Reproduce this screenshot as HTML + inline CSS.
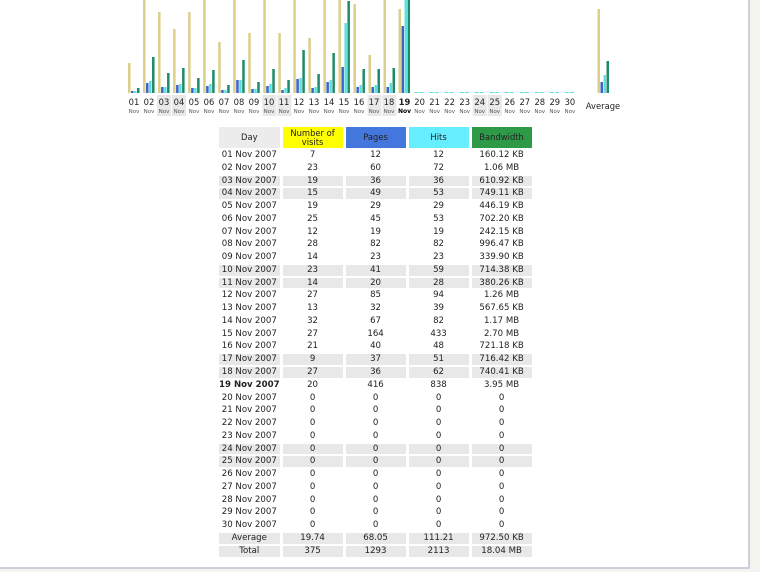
<!DOCTYPE html>
<html><head><meta charset="utf-8"><style>
body{margin:0;background:#f3f3ef;width:760px;height:572px;overflow:hidden;font-family:"DejaVu Sans","Liberation Sans",sans-serif}
#pg{position:absolute;left:0;top:0;width:748px;height:567px;background:#fff;border-right:2px solid #cfcfdc;border-bottom:2px solid #cfcfdc}
svg{position:absolute;left:0;top:0}
table{position:absolute;left:216px;top:125px;border-collapse:separate;border-spacing:3px 2px;font-size:8.6px;color:#222}
td{width:60px;height:10.76px;line-height:10.76px;padding:0;text-align:center;white-space:nowrap;overflow:hidden}
tr.h td{height:21px;line-height:9px;font-size:8.4px}
tr.w td{background:#e8e8e8}
b{font-weight:bold}
</style></head><body><div id="pg"></div>
<svg width="760" height="125" font-family="DejaVu Sans, sans-serif">
<g fill="#e8e8e8">
<rect x="157" y="95" width="14" height="21"/><rect x="172" y="95" width="14" height="21"/>
<rect x="262.3" y="95" width="14" height="21"/><rect x="277.3" y="95" width="14" height="21"/>
<rect x="367.5" y="95" width="14" height="21"/><rect x="382.5" y="95" width="14" height="21"/>
<rect x="472.7" y="95" width="14" height="21"/><rect x="487.7" y="95" width="14" height="21"/>
</g>
<defs><g id="z"><rect x="-5" y="92" width="4" height="1" fill="#66dddd"/><rect x="0" y="92" width="4" height="1" fill="#66dddd"/></g></defs>
<g id="bars">
<g transform="translate(134,0)"><rect x="-6" y="63" width="2.5" height="30" fill="#dccf8c"/><rect x="-3" y="91" width="2.5" height="2" fill="#3b64c8"/><rect x="0" y="91" width="2.5" height="2" fill="#5fe0e0"/><rect x="3" y="88" width="2.5" height="5" fill="#1f8a6a"/></g>
<g transform="translate(149.03,0)"><rect x="-6" y="-6" width="2.5" height="99" fill="#dccf8c"/><rect x="-3" y="83" width="2.5" height="10" fill="#3b64c8"/><rect x="0" y="81" width="2.5" height="12" fill="#5fe0e0"/><rect x="3" y="57" width="2.5" height="36" fill="#1f8a6a"/></g>
<g transform="translate(164.06,0)"><rect x="-6" y="12" width="2.5" height="81" fill="#dccf8c"/><rect x="-3" y="87" width="2.5" height="6" fill="#3b64c8"/><rect x="0" y="87" width="2.5" height="6" fill="#5fe0e0"/><rect x="3" y="73" width="2.5" height="20" fill="#1f8a6a"/></g>
<g transform="translate(179.09,0)"><rect x="-6" y="29" width="2.5" height="64" fill="#dccf8c"/><rect x="-3" y="85" width="2.5" height="8" fill="#3b64c8"/><rect x="0" y="84" width="2.5" height="9" fill="#5fe0e0"/><rect x="3" y="68" width="2.5" height="25" fill="#1f8a6a"/></g>
<g transform="translate(194.12,0)"><rect x="-6" y="12" width="2.5" height="81" fill="#dccf8c"/><rect x="-3" y="88" width="2.5" height="5" fill="#3b64c8"/><rect x="0" y="88" width="2.5" height="5" fill="#5fe0e0"/><rect x="3" y="78" width="2.5" height="15" fill="#1f8a6a"/></g>
<g transform="translate(209.15,0)"><rect x="-6" y="-14" width="2.5" height="107" fill="#dccf8c"/><rect x="-3" y="86" width="2.5" height="7" fill="#3b64c8"/><rect x="0" y="84" width="2.5" height="9" fill="#5fe0e0"/><rect x="3" y="70" width="2.5" height="23" fill="#1f8a6a"/></g>
<g transform="translate(224.18,0)"><rect x="-6" y="42" width="2.5" height="51" fill="#dccf8c"/><rect x="-3" y="90" width="2.5" height="3" fill="#3b64c8"/><rect x="0" y="90" width="2.5" height="3" fill="#5fe0e0"/><rect x="3" y="85" width="2.5" height="8" fill="#1f8a6a"/></g>
<g transform="translate(239.21,0)"><rect x="-6" y="-27" width="2.5" height="120" fill="#dccf8c"/><rect x="-3" y="80" width="2.5" height="13" fill="#3b64c8"/><rect x="0" y="80" width="2.5" height="13" fill="#5fe0e0"/><rect x="3" y="60" width="2.5" height="33" fill="#1f8a6a"/></g>
<g transform="translate(254.24,0)"><rect x="-6" y="33" width="2.5" height="60" fill="#dccf8c"/><rect x="-3" y="89" width="2.5" height="4" fill="#3b64c8"/><rect x="0" y="89" width="2.5" height="4" fill="#5fe0e0"/><rect x="3" y="82" width="2.5" height="11" fill="#1f8a6a"/></g>
<g transform="translate(269.27,0)"><rect x="-6" y="-6" width="2.5" height="99" fill="#dccf8c"/><rect x="-3" y="86" width="2.5" height="7" fill="#3b64c8"/><rect x="0" y="84" width="2.5" height="9" fill="#5fe0e0"/><rect x="3" y="69" width="2.5" height="24" fill="#1f8a6a"/></g>
<g transform="translate(284.3,0)"><rect x="-6" y="33" width="2.5" height="60" fill="#dccf8c"/><rect x="-3" y="90" width="2.5" height="3" fill="#3b64c8"/><rect x="0" y="88" width="2.5" height="5" fill="#5fe0e0"/><rect x="3" y="80" width="2.5" height="13" fill="#1f8a6a"/></g>
<g transform="translate(299.33,0)"><rect x="-6" y="-23" width="2.5" height="116" fill="#dccf8c"/><rect x="-3" y="79" width="2.5" height="14" fill="#3b64c8"/><rect x="0" y="78" width="2.5" height="15" fill="#5fe0e0"/><rect x="3" y="50" width="2.5" height="43" fill="#1f8a6a"/></g>
<g transform="translate(314.36,0)"><rect x="-6" y="38" width="2.5" height="55" fill="#dccf8c"/><rect x="-3" y="88" width="2.5" height="5" fill="#3b64c8"/><rect x="0" y="87" width="2.5" height="6" fill="#5fe0e0"/><rect x="3" y="74" width="2.5" height="19" fill="#1f8a6a"/></g>
<g transform="translate(329.39,0)"><rect x="-6" y="-44" width="2.5" height="137" fill="#dccf8c"/><rect x="-3" y="82" width="2.5" height="11" fill="#3b64c8"/><rect x="0" y="80" width="2.5" height="13" fill="#5fe0e0"/><rect x="3" y="53" width="2.5" height="40" fill="#1f8a6a"/></g>
<g transform="translate(344.42,0)"><rect x="-6" y="-23" width="2.5" height="116" fill="#dccf8c"/><rect x="-3" y="67" width="2.5" height="26" fill="#3b64c8"/><rect x="0" y="23" width="2.5" height="70" fill="#5fe0e0"/><rect x="3" y="1" width="2.5" height="92" fill="#1f8a6a"/></g>
<g transform="translate(359.45,0)"><rect x="-6" y="4" width="2.5" height="89" fill="#dccf8c"/><rect x="-3" y="87" width="2.5" height="6" fill="#3b64c8"/><rect x="0" y="85" width="2.5" height="8" fill="#5fe0e0"/><rect x="3" y="69" width="2.5" height="24" fill="#1f8a6a"/></g>
<g transform="translate(374.48,0)"><rect x="-6" y="55" width="2.5" height="38" fill="#dccf8c"/><rect x="-3" y="87" width="2.5" height="6" fill="#3b64c8"/><rect x="0" y="85" width="2.5" height="8" fill="#5fe0e0"/><rect x="3" y="69" width="2.5" height="24" fill="#1f8a6a"/></g>
<g transform="translate(389.51,0)"><rect x="-6" y="-23" width="2.5" height="116" fill="#dccf8c"/><rect x="-3" y="87" width="2.5" height="6" fill="#3b64c8"/><rect x="0" y="83" width="2.5" height="10" fill="#5fe0e0"/><rect x="3" y="68" width="2.5" height="25" fill="#1f8a6a"/></g>
<g transform="translate(404.54,0)"><rect x="-6" y="9" width="2.5" height="84" fill="#dccf8c"/><rect x="-3" y="26" width="2.5" height="67" fill="#3b64c8"/><rect x="0" y="0" width="2.5" height="93" fill="#5fe0e0"/><rect x="3" y="0" width="2.5" height="93" fill="#1f8a6a"/></g>
<use href="#z" x="419.57"/><use href="#z" x="434.6"/><use href="#z" x="449.63"/><use href="#z" x="464.66"/><use href="#z" x="479.69"/><use href="#z" x="494.72"/><use href="#z" x="509.75"/><use href="#z" x="524.78"/><use href="#z" x="539.81"/><use href="#z" x="554.84"/><use href="#z" x="569.87"/>
<g transform="translate(603.5,0)"><rect x="-6" y="9" width="2.5" height="84" fill="#dccf8c"/><rect x="-3" y="82" width="2.5" height="11" fill="#3b64c8"/><rect x="0" y="75" width="2.5" height="18" fill="#5fe0e0"/><rect x="3" y="61" width="2.5" height="32" fill="#1f8a6a"/></g>
</g>
<g font-size="8.4" fill="#222" text-anchor="middle">
<text x="134" y="105">01</text><text x="149" y="105">02</text><text x="164" y="105">03</text><text x="179" y="105">04</text><text x="194" y="105">05</text><text x="209" y="105">06</text><text x="224" y="105">07</text><text x="239" y="105">08</text><text x="254" y="105">09</text><text x="269" y="105">10</text><text x="284" y="105">11</text><text x="299" y="105">12</text><text x="314" y="105">13</text><text x="329" y="105">14</text><text x="344" y="105">15</text><text x="359" y="105">16</text><text x="374" y="105">17</text><text x="389" y="105">18</text><text x="404.5" y="105" font-weight="bold">19</text><text x="419.6" y="105">20</text><text x="434.6" y="105">21</text><text x="449.6" y="105">22</text><text x="464.7" y="105">23</text><text x="479.7" y="105">24</text><text x="494.7" y="105">25</text><text x="509.8" y="105">26</text><text x="524.8" y="105">27</text><text x="539.8" y="105">28</text><text x="554.8" y="105">29</text><text x="569.9" y="105">30</text>
<text x="603" y="109">Average</text>
</g>
<g font-size="5.5" fill="#555" text-anchor="middle">
<text x="134" y="113">Nov</text><text x="149" y="113">Nov</text><text x="164" y="113">Nov</text><text x="179" y="113">Nov</text><text x="194" y="113">Nov</text><text x="209" y="113">Nov</text><text x="224" y="113">Nov</text><text x="239" y="113">Nov</text><text x="254" y="113">Nov</text><text x="269" y="113">Nov</text><text x="284" y="113">Nov</text><text x="299" y="113">Nov</text><text x="314" y="113">Nov</text><text x="329" y="113">Nov</text><text x="344" y="113">Nov</text><text x="359" y="113">Nov</text><text x="374" y="113">Nov</text><text x="389" y="113">Nov</text><text x="404.5" y="113" font-weight="bold" fill="#000" font-size="6">Nov</text><text x="419.6" y="113">Nov</text><text x="434.6" y="113">Nov</text><text x="449.6" y="113">Nov</text><text x="464.7" y="113">Nov</text><text x="479.7" y="113">Nov</text><text x="494.7" y="113">Nov</text><text x="509.8" y="113">Nov</text><text x="524.8" y="113">Nov</text><text x="539.8" y="113">Nov</text><text x="554.8" y="113">Nov</text><text x="569.9" y="113">Nov</text>
</g>
</svg>
<table>
<tr class="h"><td style="background:#ececec">Day</td><td style="background:#ffff00">Number of<br>visits</td><td style="background:#4477dd">Pages</td><td style="background:#66eeff">Hits</td><td style="background:#2e9a48">Bandwidth</td></tr>
<tr><td>01 Nov 2007</td><td>7</td><td>12</td><td>12</td><td>160.12 KB</td></tr>
<tr><td>02 Nov 2007</td><td>23</td><td>60</td><td>72</td><td>1.06 MB</td></tr>
<tr class="w"><td>03 Nov 2007</td><td>19</td><td>36</td><td>36</td><td>610.92 KB</td></tr>
<tr class="w"><td>04 Nov 2007</td><td>15</td><td>49</td><td>53</td><td>749.11 KB</td></tr>
<tr><td>05 Nov 2007</td><td>19</td><td>29</td><td>29</td><td>446.19 KB</td></tr>
<tr><td>06 Nov 2007</td><td>25</td><td>45</td><td>53</td><td>702.20 KB</td></tr>
<tr><td>07 Nov 2007</td><td>12</td><td>19</td><td>19</td><td>242.15 KB</td></tr>
<tr><td>08 Nov 2007</td><td>28</td><td>82</td><td>82</td><td>996.47 KB</td></tr>
<tr><td>09 Nov 2007</td><td>14</td><td>23</td><td>23</td><td>339.90 KB</td></tr>
<tr class="w"><td>10 Nov 2007</td><td>23</td><td>41</td><td>59</td><td>714.38 KB</td></tr>
<tr class="w"><td>11 Nov 2007</td><td>14</td><td>20</td><td>28</td><td>380.26 KB</td></tr>
<tr><td>12 Nov 2007</td><td>27</td><td>85</td><td>94</td><td>1.26 MB</td></tr>
<tr><td>13 Nov 2007</td><td>13</td><td>32</td><td>39</td><td>567.65 KB</td></tr>
<tr><td>14 Nov 2007</td><td>32</td><td>67</td><td>82</td><td>1.17 MB</td></tr>
<tr><td>15 Nov 2007</td><td>27</td><td>164</td><td>433</td><td>2.70 MB</td></tr>
<tr><td>16 Nov 2007</td><td>21</td><td>40</td><td>48</td><td>721.18 KB</td></tr>
<tr class="w"><td>17 Nov 2007</td><td>9</td><td>37</td><td>51</td><td>716.42 KB</td></tr>
<tr class="w"><td>18 Nov 2007</td><td>27</td><td>36</td><td>62</td><td>740.41 KB</td></tr>
<tr><td><b>19 Nov 2007</b></td><td>20</td><td>416</td><td>838</td><td>3.95 MB</td></tr>
<tr><td>20 Nov 2007</td><td>0</td><td>0</td><td>0</td><td>0</td></tr>
<tr><td>21 Nov 2007</td><td>0</td><td>0</td><td>0</td><td>0</td></tr>
<tr><td>22 Nov 2007</td><td>0</td><td>0</td><td>0</td><td>0</td></tr>
<tr><td>23 Nov 2007</td><td>0</td><td>0</td><td>0</td><td>0</td></tr>
<tr class="w"><td>24 Nov 2007</td><td>0</td><td>0</td><td>0</td><td>0</td></tr>
<tr class="w"><td>25 Nov 2007</td><td>0</td><td>0</td><td>0</td><td>0</td></tr>
<tr><td>26 Nov 2007</td><td>0</td><td>0</td><td>0</td><td>0</td></tr>
<tr><td>27 Nov 2007</td><td>0</td><td>0</td><td>0</td><td>0</td></tr>
<tr><td>28 Nov 2007</td><td>0</td><td>0</td><td>0</td><td>0</td></tr>
<tr><td>29 Nov 2007</td><td>0</td><td>0</td><td>0</td><td>0</td></tr>
<tr><td>30 Nov 2007</td><td>0</td><td>0</td><td>0</td><td>0</td></tr>
<tr class="w"><td>Average</td><td>19.74</td><td>68.05</td><td>111.21</td><td>972.50 KB</td></tr>
<tr class="w"><td>Total</td><td>375</td><td>1293</td><td>2113</td><td>18.04 MB</td></tr>
</table>
</body></html>
